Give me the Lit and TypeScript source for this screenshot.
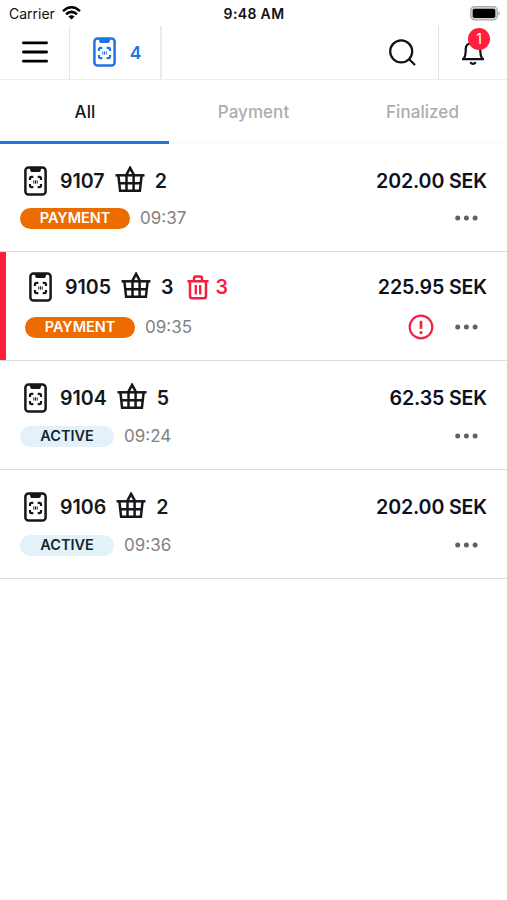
import { LitElement, html, css, svg, nothing } from "lit";
import { customElement, property } from "lit/decorators.js";
import { classMap } from "lit/directives/class-map.js";

interface Order {
  id: string;
  items: number;
  removed?: number;
  status: "PAYMENT" | "ACTIVE";
  time: string;
  total: string;
}

const ORDERS: Order[] = [
  { id: "9107", items: 2, status: "PAYMENT", time: "09:37", total: "202.00 SEK" },
  { id: "9105", items: 3, removed: 3, status: "PAYMENT", time: "09:35", total: "225.95 SEK" },
  { id: "9104", items: 5, status: "ACTIVE", time: "09:24", total: "62.35 SEK" },
  { id: "9106", items: 2, status: "ACTIVE", time: "09:36", total: "202.00 SEK" },
];

const phoneIcon = html`<svg class="phone" width="23" height="30" viewBox="0 0 23 30" fill="none" stroke="currentColor">
  ${svg`<rect x="1.400" y="1.400" width="20.200" height="27.200" rx="3.200" stroke-width="2.500"/>
  <path d="M5.500 1.500h12l-1 3.500q-.3.900-1.200.900h-7.600q-.9 0-1.200-.9z" fill="currentColor" stroke="none"/>
  <path d="M6 14v-1.500q0-1.600 1.600-1.600h1.700M13.700 10.900h1.700q1.600 0 1.600 1.600v1.500M17 18v1.500q0 1.600-1.600 1.600h-1.700M9.300 21.100h-1.700q-1.600 0-1.600-1.600v-1.500" stroke-width="2.200"/>
  <path d="M9.800 14.400v3.200M11.500 14.400v3.200M13.200 14.400v3.200" stroke-width="1"/>`}
</svg>`;

const basketIcon = html`<svg class="basket" width="30" height="27" viewBox="0 0 30 27" fill="none" stroke="currentColor" stroke-width="2.500">
  ${svg`<path d="M.5 9.300h29"/>
  <path d="M3.400 9.300l1.700 15.500h19.800l1.700-15.500M4.300 17.200h21.400M11.500 9.300v15.600M18.600 9.300v15.600"/>
  <path d="M11.200 9.200l3.900-7.400 3.900 7.400" stroke-width="2.500"/>`}
</svg>`;

const trashIcon = html`<svg class="trash" width="22" height="25" viewBox="0 0 22 25" fill="none" stroke="currentColor" stroke-width="2.500">
  ${svg`<path d="M.4 6.200h21.200M3 6.200v14.800q0 2.300 2.300 2.300h11.400q2.300 0 2.300-2.300V6.200M7 6.200V3.600q0-2 2-2h4q2 0 2 2v2.600"/>
  <path d="M8.800 10v9.500M13.200 10v9.500" stroke-width="2.300"/>`}
</svg>`;

@customElement("status-bar")
export class StatusBar extends LitElement {
  static styles = css`
    :host { display: grid; grid-template-columns: 1fr auto 1fr; align-items: center; height: 26px; padding: 0 8px 0 9px; box-sizing: border-box; font-size: 14px; color: #111; }
    .carrier { display: flex; align-items: center; gap: 7px; }
    .clock { font-weight: 600; font-size: 14px; letter-spacing: 0.35px; }
    .battery { justify-self: end; display: block; margin-right: -1px; }
    svg { display: block; }
  `;
  render() {
    return html`
      <span class="carrier">Carrier
        <svg width="19" height="14" viewBox="0 0 19 14" fill="none" stroke="#000" stroke-width="2.500">
          <path d="M1 5.100Q9.500-2.500 18 5.100M4 8.200q5.500-4.700 11 0"/>
          <path d="M6.400 10.400q3.100-2.400 6.200 0L9.500 13.600z" fill="#000" stroke="none"/>
        </svg>
      </span>
      <span class="clock">9:48 AM</span>
      <svg class="battery" width="30" height="15" viewBox="0 0 30 15">
        <rect x=".7" y=".7" width="26.600" height="13.200" rx="3.800" fill="#d6d6d6" stroke="#aaa" stroke-width="1.200"/>
        <rect x="2.700" y="2.700" width="22.600" height="9.200" rx="1.700" fill="#000"/>
        <path d="M28.400 5.200q1.500.6 1.500 2.100t-1.500 2.100z" fill="#aaa"/>
      </svg>`;
  }
}

@customElement("app-header")
export class AppHeader extends LitElement {
  static styles = css`
    :host { display: flex; height: 54px; box-sizing: border-box; border-bottom: 1px solid #ededed; color: #111; }
    svg { display: block; }
    .cell { display: flex; align-items: center; justify-content: center; box-sizing: border-box; }
    .menu { width: 70px; border-right: 1px solid #e6e6e6; }
    .menu svg { margin-top: -1px; }
    .devices { width: 92px; border-right: 2px solid #ebebeb; gap: 14px; color: #1f74e0; font-size: 17.5px; font-weight: 600; padding-left: 4px; }
    .devices svg { margin-top: -1px; }
    .search { width: 71px; margin-left: auto; }
    .bell { width: 69px; border-left: 1px solid #e2e2e2; position: relative; }
    .badge { position: absolute; left: 29px; top: 2px; width: 22px; height: 22px; border-radius: 50%; background: #ff1f3d; color: #fff; font-size: 14px; line-height: 21px; text-align: center; }
  `;
  render() {
    return html`
      <div class="cell menu">
        <svg width="28" height="24" viewBox="0 0 28 24" stroke="#000" stroke-width="2.800" stroke-linecap="round"><path d="M2.400 2.800h23.200M2.400 12h23.200M2.400 21.200h23.200"/></svg>
      </div>
      <div class="cell devices">${phoneIcon}<span>4</span></div>
      <div class="cell search">
        <svg width="28" height="28" viewBox="0 0 28 28" fill="none" stroke="currentColor" stroke-width="2.200"><circle cx="12.200" cy="12.400" r="11"/><path d="M20 20l6 6"/></svg>
      </div>
      <div class="cell bell">
        <svg width="24" height="26" viewBox="0 0 24 26" fill="none" stroke="currentColor" stroke-width="2.200"><path d="M1 19.200h22M2.600 19.200q2.100-3 2.100-7.600V9q0-6 7.300-6t7.300 6v2.600q0 4.600 2.100 7.600"/><path d="M9.200 22.300q2.800 3.200 5.600 0"/></svg>
        <span class="badge">1</span>
      </div>`;
  }
}

@customElement("filter-tabs")
export class FilterTabs extends LitElement {
  static styles = css`
    :host { display: grid; grid-template-columns: repeat(3, 1fr); height: 64px; }
    .tab { display: flex; align-items: center; justify-content: center; box-sizing: border-box; border-bottom: 1px solid #fafafa; padding-top: 1px; font-size: 17px; font-weight: 500; letter-spacing: 0.05px; color: #adadad; }
    .active { color: #10131c; border-bottom: 3px solid #2374d9; padding-top: 3px; padding-left: 1px; }
  `;
  render() {
    return ["All", "Payment", "Finalized"].map(
      (label, i) => html`<div class=${classMap({ tab: true, active: i === 0 })}>${label}</div>`
    );
  }
}

@customElement("order-row")
export class OrderRow extends LitElement {
  @property({ attribute: false }) order!: Order;

  static styles = css`
    :host { display: block; height: 109px; }
    :host(:first-of-type) { height: 108px; }
    :host(:first-of-type) .meta { margin-top: 11px; }
    svg { display: block; flex: none; }
    .row { height: 100%; box-sizing: border-box; border-bottom: 1px solid #dedede; padding: 22px 20px 0 20px; color: #15171b; }
    .alert { position: relative; padding-left: 25px; padding-top: 20px; }
    .alert::before { content: ""; position: absolute; left: 0; top: 0; bottom: 0; width: 6px; background: #ff1f3d; }
    .line { display: flex; align-items: center; height: 30px; font-size: 19.6px; font-weight: 600; }
    .phone { margin: 0 13px 0 4px; }
    .basket { margin: -3px 10px 0 10px; }
    .trash { margin: 0 7px 0 13px; }
    .removed { display: flex; align-items: center; color: #f51f3d; }
    .total { margin-left: auto; color: #0d1020; letter-spacing: -0.13px; }
    .meta { display: flex; align-items: center; height: 22px; margin-top: 12px; }
    .alert .meta { margin-top: 14px; }
    .pill { box-sizing: border-box; height: 21px; line-height: 20px; border-radius: 11px; text-align: center; font-size: 14.5px; font-weight: 600; letter-spacing: -0.05px; }
    .payment { width: 110px; background: #ec6c00; color: #fff; }
    .active { width: 94px; background: #e3f2fa; color: #16262c; }
    .time { margin-left: 10px; font-size: 17px; color: #828282; }
    .actions { display: flex; align-items: center; gap: 21px; margin-left: auto; padding-right: 9px; }
  `;

  render() {
    const o = this.order;
    const alert = o.removed !== undefined;
    return html`<div class=${classMap({ row: true, alert })}>
      <div class="line">
        ${phoneIcon}<span class="id">${o.id}</span>${basketIcon}<span>${o.items}</span>
        ${alert ? html`<span class="removed">${trashIcon}${o.removed}</span>` : nothing}
        <span class="total">${o.total}</span>
      </div>
      <div class="meta">
        <span class=${classMap({ pill: true, payment: o.status === "PAYMENT", active: o.status === "ACTIVE" })}>${o.status}</span>
        <span class="time">${o.time}</span>
        <span class="actions">
          ${alert
            ? html`<svg width="26" height="26" viewBox="0 0 26 26" fill="none" stroke="#f02442"><circle cx="13" cy="13" r="11.300" stroke-width="2.200"/><path d="M13 6.800v8" stroke-width="2.700"/><circle cx="13" cy="18.600" r="1.600" fill="#f02442" stroke="none"/></svg>`
            : nothing}
          <svg width="23" height="6" viewBox="0 0 23 6" fill="#606060"><circle cx="2.700" cy="3" r="2.500"/><circle cx="11.400" cy="3" r="2.500"/><circle cx="20.100" cy="3" r="2.500"/></svg>
        </span>
      </div>
    </div>`;
  }
}

@customElement("app-root")
export class AppRoot extends LitElement {
  static styles = css`
    :host { display: block; width: 100%; height: 900px; overflow: hidden; background: #fff; font-family: Inter, "Liberation Sans", sans-serif; }
  `;
  render() {
    return html`<status-bar></status-bar><app-header></app-header><filter-tabs></filter-tabs>
      ${ORDERS.map((o) => html`<order-row .order=${o}></order-row>`)}`;
  }
}
